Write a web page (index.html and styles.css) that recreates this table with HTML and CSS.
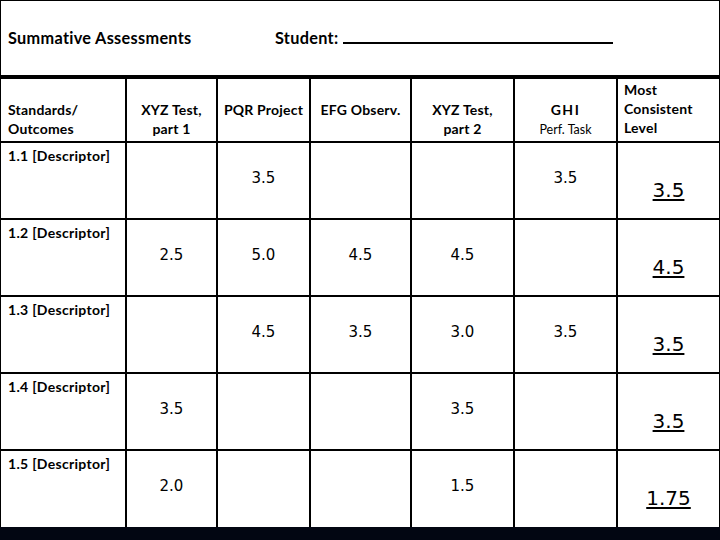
FILE: index.html
```html
<!DOCTYPE html>
<html lang="en">
<head>
<meta charset="utf-8">
<title>Summative Assessments</title>
<link rel="stylesheet" href="styles.css">
</head>
<body>
<div class="sheet">
  <header class="title">
    <h1 class="title-label">Summative Assessments</h1>
    <div class="student">Student: <span class="blank"></span></div>
  </header>
  <div class="grid">
    <div class="cell head left">Standards/<br>Outcomes</div>
    <div class="cell head">XYZ Test,<br>part 1</div>
    <div class="cell head">PQR Project</div>
    <div class="cell head">EFG Observ.</div>
    <div class="cell head">XYZ Test,<br>part 2</div>
    <div class="cell head"><span class="ghi">GHI</span><br><span class="sub">Perf. Task</span></div>
    <div class="cell head last">Most<br>Consistent<br>Level</div>

    <div class="cell desc">1.1 [Descriptor]</div>
    <div class="cell val"></div>
    <div class="cell val">3.5</div>
    <div class="cell val"></div>
    <div class="cell val"></div>
    <div class="cell val">3.5</div>
    <div class="cell most"><span>3.5</span></div>

    <div class="cell desc">1.2 [Descriptor]</div>
    <div class="cell val">2.5</div>
    <div class="cell val">5.0</div>
    <div class="cell val">4.5</div>
    <div class="cell val">4.5</div>
    <div class="cell val"></div>
    <div class="cell most"><span>4.5</span></div>

    <div class="cell desc">1.3 [Descriptor]</div>
    <div class="cell val"></div>
    <div class="cell val">4.5</div>
    <div class="cell val">3.5</div>
    <div class="cell val">3.0</div>
    <div class="cell val">3.5</div>
    <div class="cell most"><span>3.5</span></div>

    <div class="cell desc">1.4 [Descriptor]</div>
    <div class="cell val">3.5</div>
    <div class="cell val"></div>
    <div class="cell val"></div>
    <div class="cell val">3.5</div>
    <div class="cell val"></div>
    <div class="cell most"><span>3.5</span></div>

    <div class="cell desc">1.5 [Descriptor]</div>
    <div class="cell val">2.0</div>
    <div class="cell val"></div>
    <div class="cell val"></div>
    <div class="cell val">1.5</div>
    <div class="cell val"></div>
    <div class="cell most"><span>1.75</span></div>
  </div>
  <div class="band"></div>
</div>
</body>
</html>
```
FILE: styles.css
```css
html, body {
  margin: 0;
  padding: 0;
  background: #fff;
}

.sheet {
  width: 720px;
  height: 540px;
  display: flex;
  flex-direction: column;
  font-family: Lato, "Open Sans", sans-serif;
  color: #000;
}

.title {
  box-sizing: border-box;
  height: 75px;
  border: 1px solid #000;
  border-bottom: none;
  display: flex;
  align-items: center;
  padding-left: 7px;
  padding-bottom: 1px;
}

.title-label {
  margin: 0;
  width: 267px;
  font-size: 16.3px;
  font-weight: 700;
  letter-spacing: 0.3px;
}

.student {
  font-size: 16.3px;
  font-weight: 700;
  letter-spacing: 0.3px;
}

.blank {
  display: inline-block;
  width: 270px;
  border-bottom: 2px solid #000;
}

.grid {
  display: grid;
  grid-template-columns: 124px 89px 91px 99px 101px 101px 101px;
  grid-template-rows: 62px repeat(4, 75px) 76px;
  gap: 2px;
  background: #000;
  padding: 4px 1px 0 1px;
}

.cell {
  background: #fff;
}

.head {
  font-size: 14px;
  font-weight: 700;
  line-height: 19px;
  padding-top: 21px;
  text-align: center;
  letter-spacing: 0.2px;
}

.head.left {
  text-align: left;
  padding-left: 7px;
}

.head.last {
  text-align: left;
  padding-left: 6px;
  padding-top: 1px;
}

.ghi {
  letter-spacing: 1.5px;
}

.sub {
  font-weight: 400;
  font-size: 12.5px;
  letter-spacing: 0;
}

.desc {
  font-size: 14px;
  font-weight: 700;
  line-height: 19px;
  padding: 3px 0 0 7px;
  letter-spacing: 0.3px;
}

.val {
  font-family: "DejaVu Sans", sans-serif;
  font-size: 15px;
  line-height: 19px;
  padding-top: 26px;
  text-align: center;
}

.most {
  font-family: "DejaVu Sans", sans-serif;
  font-size: 20px;
  line-height: 24px;
  padding-top: 35px;
  text-align: center;
}

.most span {
  text-decoration: underline;
  text-decoration-thickness: 2px;
  text-underline-offset: 2px;
}

.band {
  height: 13px;
  background: #020612;
}
```
